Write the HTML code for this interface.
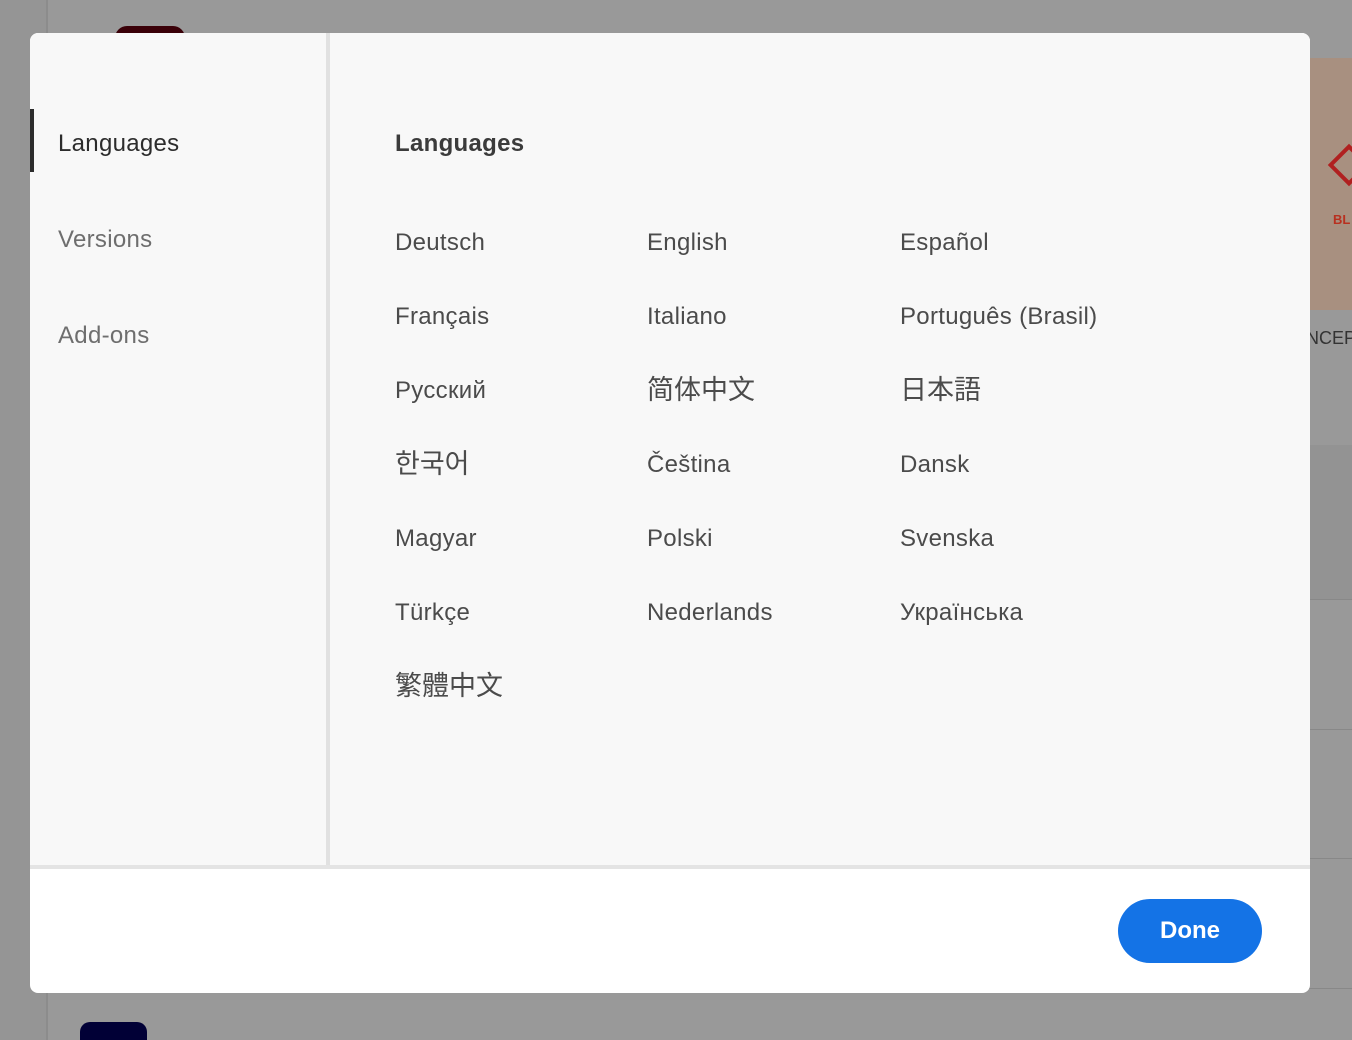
<!DOCTYPE html>
<html style="overflow:hidden;height:1040px"><head><meta charset="utf-8"><style>
*{margin:0;padding:0;box-sizing:border-box}
body{width:1352px;height:1040px;background:#999;position:relative;overflow:hidden;font-family:"Liberation Sans","Noto Sans CJK SC",sans-serif}
.abs{position:absolute}
.t{position:absolute;font-size:24px;color:#4b4b4b;line-height:30px;white-space:nowrap;letter-spacing:0.3px}
.c{font-size:27px;letter-spacing:0}
</style></head><body>
<div class="abs" style="left:0;top:0;width:46px;height:1040px;background:#959595"></div>
<div class="abs" style="left:46px;top:0;width:2px;height:1040px;background:#8c8c8c"></div>
<div class="abs" style="left:115px;top:26px;width:70px;height:40px;border-radius:12px;background:#3a0008"></div>
<div class="abs" style="left:80px;top:1022px;width:67px;height:18px;border-radius:10px 10px 0 0;background:#010036"></div>
<div class="abs" style="left:1300px;top:58px;width:52px;height:252px;background:#a89080"></div>
<div class="abs" style="left:1334px;top:150px;width:30px;height:30px;border:4px solid #b02020;transform:rotate(45deg)"></div>
<div class="abs" style="left:1333px;top:212px;font-size:13px;font-weight:bold;color:#b83020">BL</div>
<div class="abs" style="left:1306px;top:328px;font-size:18px;color:#333">NCEP</div>
<div class="abs" style="left:1300px;top:445px;width:52px;height:155px;background:#939393"></div>
<div class="abs" style="left:1300px;top:599px;width:52px;height:1px;background:#888"></div>
<div class="abs" style="left:1300px;top:729px;width:52px;height:1px;background:#888"></div>
<div class="abs" style="left:1300px;top:858px;width:52px;height:1px;background:#888"></div>
<div class="abs" style="left:1300px;top:988px;width:52px;height:1px;background:#888"></div>

<div class="abs" style="left:30px;top:33px;width:1280px;height:960px;border-radius:8px;background:#fff;overflow:hidden">
  <div class="abs" style="left:0;top:0;width:1280px;height:832px;background:#f8f8f8"></div>
  <div class="abs" style="left:296px;top:0;width:4px;height:832px;background:#e1e1e1"></div>
  <div class="abs" style="left:0;top:832px;width:1280px;height:4px;background:#e4e4e4"></div>
  <div class="abs" style="left:0;top:76px;width:4px;height:63px;background:#2c2c2c"></div>
  <div class="t" style="left:28px;top:96px;color:#2c2c2c">Languages</div>
  <div class="t" style="left:28px;top:192px;color:#6e6e6e">Versions</div>
  <div class="t" style="left:28px;top:288px;color:#6e6e6e">Add-ons</div>
  <div class="t" style="left:365px;top:96px;font-weight:bold;color:#3b3b3b">Languages</div>
</div>
<div class="t" style="left:395px;top:228px">Deutsch</div>
<div class="t" style="left:647px;top:228px">English</div>
<div class="t" style="left:900px;top:228px">Español</div>
<div class="t" style="left:395px;top:302px">Français</div>
<div class="t" style="left:647px;top:302px">Italiano</div>
<div class="t" style="left:900px;top:302px">Português (Brasil)</div>
<div class="t" style="left:395px;top:376px">Русский</div>
<div class="t c" style="left:647px;top:375px">简体中文</div>
<div class="t c" style="left:900px;top:375px;font-family:'Liberation Sans','Noto Sans CJK JP',sans-serif">日本語</div>
<div class="t c" style="left:395px;top:449px;font-family:'Liberation Sans','Noto Sans CJK KR',sans-serif">한국어</div>
<div class="t" style="left:647px;top:450px">Čeština</div>
<div class="t" style="left:900px;top:450px">Dansk</div>
<div class="t" style="left:395px;top:524px">Magyar</div>
<div class="t" style="left:647px;top:524px">Polski</div>
<div class="t" style="left:900px;top:524px">Svenska</div>
<div class="t" style="left:395px;top:598px">Türkçe</div>
<div class="t" style="left:647px;top:598px">Nederlands</div>
<div class="t" style="left:900px;top:598px">Українська</div>
<div class="t c" style="left:395px;top:671px;font-family:'Liberation Sans','Noto Sans CJK TC',sans-serif">繁體中文</div>
<div class="abs" style="left:1118px;top:899px;width:144px;height:64px;border-radius:32px;background:#1473e6;color:#fff;font-size:24px;font-weight:bold;text-align:center;line-height:64px">Done</div>
</body></html>
